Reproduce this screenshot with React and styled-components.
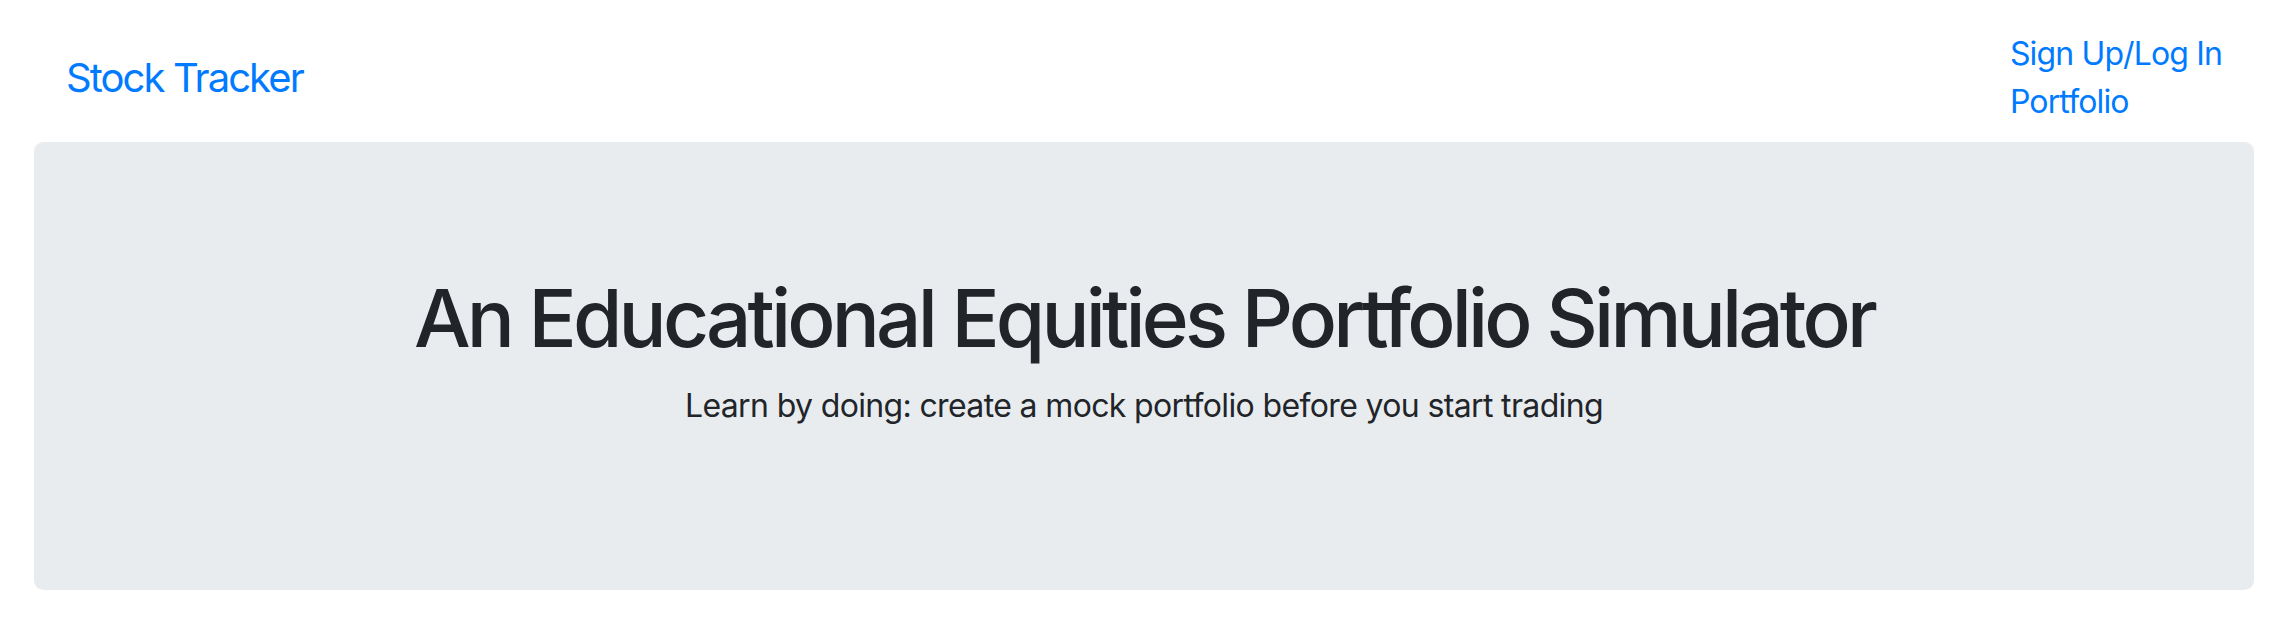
import React from "react";
import styled, { createGlobalStyle } from "styled-components";

const GlobalStyle = createGlobalStyle`
  html, body { margin: 0; padding: 0; background: #ffffff; }
  body {
    font-family: Inter, "Noto Sans", "Liberation Sans", sans-serif;
    color: #212529;
    -webkit-font-smoothing: antialiased;
  }
  * { box-sizing: border-box; }
`;

const Page = styled.div`
  display: flex;
  flex-direction: column;
`;

const Navbar = styled.nav`
  display: flex;
  justify-content: space-between;
  align-items: center;
  padding: 30px 64px 16px 66px;
`;

const Brand = styled.a`
  font-size: 40px;
  line-height: 60px;
  letter-spacing: -0.048em;
  color: #007bff;
  text-decoration: none;
  white-space: nowrap;
`;

const NavList = styled.ul`
  list-style: none;
  margin: 0;
  padding: 0;
  display: flex;
  flex-direction: column;
`;

const NavLink = styled.a`
  display: block;
  font-size: 32px;
  line-height: 48px;
  letter-spacing: -0.027em;
  color: #007bff;
  text-decoration: none;
  white-space: nowrap;
`;

const Jumbotron = styled.section`
  margin: 0 32px 0 34px;
  padding: 128px 64px;
  background: #e9ecef;
  border-radius: 9.6px;
  text-align: center;
`;

const Title = styled.h1`
  margin: 0 0 16px;
  font-size: 80px;
  line-height: 96px;
  font-weight: 500;
  letter-spacing: -0.048em;
  color: #212529;
`;

const Lead = styled.p`
  margin: 0 0 32px;
  font-size: 32px;
  line-height: 48px;
  letter-spacing: -0.02em;
  color: #212529;
`;

export default function App() {
  return (
    <Page>
      <GlobalStyle />
      <Navbar>
        <Brand href="#">Stock Tracker</Brand>
        <NavList>
          <li><NavLink href="#">Sign Up/Log In</NavLink></li>
          <li><NavLink href="#">Portfolio</NavLink></li>
        </NavList>
      </Navbar>
      <Jumbotron>
        <Title>An Educational Equities Portfolio Simulator</Title>
        <Lead>Learn by doing: create a mock portfolio before you start trading</Lead>
      </Jumbotron>
    </Page>
  );
}
